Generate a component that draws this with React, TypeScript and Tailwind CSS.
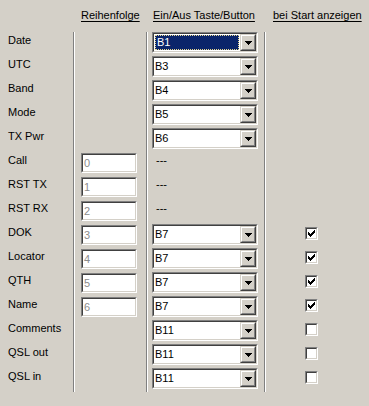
import React from 'react';

type Row = {
  label: string;
  num: number | null;
  key: string | null;
  check: boolean | null;
  selected?: boolean;
};

const rows: Row[] = [
  { label: 'Date', num: null, key: 'B1', check: null, selected: true },
  { label: 'UTC', num: null, key: 'B3', check: null },
  { label: 'Band', num: null, key: 'B4', check: null },
  { label: 'Mode', num: null, key: 'B5', check: null },
  { label: 'TX Pwr', num: null, key: 'B6', check: null },
  { label: 'Call', num: 0, key: null, check: null },
  { label: 'RST TX', num: 1, key: null, check: null },
  { label: 'RST RX', num: 2, key: null, check: null },
  { label: 'DOK', num: 3, key: 'B7', check: true },
  { label: 'Locator', num: 4, key: 'B7', check: true },
  { label: 'QTH', num: 5, key: 'B7', check: true },
  { label: 'Name', num: 6, key: 'B7', check: true },
  { label: 'Comments', num: null, key: 'B11', check: false },
  { label: 'QSL out', num: null, key: 'B11', check: false },
  { label: 'QSL in', num: null, key: 'B11', check: false },
];

const font = { fontFamily: '"Liberation Sans", Arial, sans-serif' };

function Sunken({ className, children }: { className: string; children?: React.ReactNode }) {
  return (
    <div className={`border border-[#808080] border-b-white border-r-white ${className}`}>
      <div className="flex h-full w-full border border-[#404040] border-b-[#d4d0c8] border-r-[#d4d0c8] bg-white">
        {children}
      </div>
    </div>
  );
}

function Separator() {
  return (
    <div className="flex shrink-0">
      <div className="w-px bg-[#808080]" />
      <div className="w-px bg-white" />
    </div>
  );
}

function Combo({ value, selected }: { value: string; selected?: boolean }) {
  return (
    <Sunken className="h-[21px] w-[106px]">
      <div className="flex min-w-0 flex-1 items-center">
        {selected ? (
          <div className="m-px flex h-[15px] flex-1 items-center border border-dotted border-[#e8d890] bg-[#0a246a] pl-px text-white">
            {value}
          </div>
        ) : (
          <span className="pl-px text-black">{value}</span>
        )}
      </div>
      <div className="h-[17px] w-4 shrink-0 border border-[#d4d0c8] border-b-[#404040] border-r-[#404040]">
        <div className="flex h-full w-full items-center justify-center border border-white border-b-[#808080] border-r-[#808080] bg-[#d4d0c8]">
          <svg width="7" height="4" viewBox="0 0 7 4" shapeRendering="crispEdges">
            <path d="M0 0h7v1H0zM1 1h5v1H1zM2 2h3v1H2zM3 3h1v1H3z" fill="#000" />
          </svg>
        </div>
      </div>
    </Sunken>
  );
}

function CheckBox({ checked }: { checked: boolean }) {
  return (
    <Sunken className="h-[13px] w-[13px]">
      {checked && (
        <svg width="9" height="9" viewBox="0 0 9 9" shapeRendering="crispEdges">
          <path
            d="M7 1h1v1H7zM6 2h2v1H6zM1 3h1v1H1zM5 3h3v1H5zM1 4h2v1H1zM4 4h3v1H4zM1 5h5v1H1zM2 6h3v1H2zM3 7h1v1H3z"
            fill="#000"
          />
        </svg>
      )}
    </Sunken>
  );
}

export default function App() {
  return (
    <div className="h-[406px] w-[369px] overflow-hidden bg-[#d4d0c8] text-[11px] leading-[13px] text-black" style={font}>
      {/* Header */}
      <div className="flex h-8 pt-[9px]">
        <div className="w-[75px] shrink-0" />
        <div className="w-[73px] shrink-0 pl-[6px]">
          <span className="underline underline-offset-2">Reihenfolge</span>
        </div>
        <div className="w-[118px] shrink-0 pl-[5px]">
          <span className="underline underline-offset-2">Ein/Aus Taste/Button</span>
        </div>
        <div className="flex-1 pl-[7px]">
          <span className="underline underline-offset-2">bei Start anzeigen</span>
        </div>
      </div>

      {/* Body */}
      <div className="flex">
        <div className="flex w-[73px] shrink-0 flex-col">
          {rows.map((r) => (
            <div key={r.label} className="h-6 pl-2 pt-[2px]">
              {r.label}
            </div>
          ))}
        </div>
        <Separator />
        <div className="flex w-[71px] shrink-0 flex-col pl-[6px]">
          {rows.map((r) => (
            <div key={r.label} className="h-6 pt-px">
              {r.num !== null && (
                <Sunken className="h-5 w-14">
                  <span className="flex items-center pl-px text-[#8c8c8c]">{r.num}</span>
                </Sunken>
              )}
            </div>
          ))}
        </div>
        <Separator />
        <div className="flex w-[116px] shrink-0 flex-col pl-1">
          {rows.map((r) => (
            <div key={r.label} className="h-6">
              {r.key ? (
                <Combo value={r.key} selected={r.selected} />
              ) : (
                <div className="pl-1 pt-[2px]">---</div>
              )}
            </div>
          ))}
        </div>
        <Separator />
        <div className="flex flex-1 flex-col pl-[39px]">
          {rows.map((r) => (
            <div key={r.label} className="h-6 pt-[3px]">
              {r.check !== null && <CheckBox checked={r.check} />}
            </div>
          ))}
        </div>
      </div>
    </div>
  );
}
